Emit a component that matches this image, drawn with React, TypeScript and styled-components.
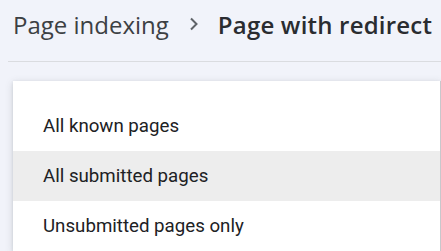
import React from "react";
import styled, { createGlobalStyle } from "styled-components";

const GlobalStyle = createGlobalStyle`
    html, body {
        margin: 0;
        padding: 0;
        background: #f1f3fa;
        overflow: hidden;
    }
`

const StyledPage = styled.div`
    width: 441px;
    height: 251px;
    overflow: hidden;
    background: #f1f3fa;
`

const StyledHeader = styled.div`
    display: flex;
    align-items: center;
    height: 48px;
    padding: 0 0 0 13px;
    margin-bottom: 13px;
    font-family: "Open Sans", "Inter", sans-serif;
    font-size: 24px;
    white-space: nowrap;
`

const StyledCrumb = styled.span<{ $current?: boolean }>`
    color: ${p => (p.$current ? "#2a2c30" : "#3c4043")};
    font-weight: ${p => (p.$current ? 600 : 400)};
    letter-spacing: ${p => (p.$current ? "0.2px" : "0")};
`

const StyledChevron = styled.svg`
    width: 12px;
    height: 14px;
    margin: 0 18px 0 19px;
    flex: 0 0 auto;
`

const StyledDivider = styled.div`
    height: 1px;
    margin-left: 8px;
    background: #dadce0;
`

const StyledMenu = styled.ul`
    list-style: none;
    margin: 19px 0 0 13px;
    padding: 20px 0 0;
    background: #ffffff;
    border-right: 1px solid #c8c8cc;
    box-shadow: 0 2px 8px rgba(60, 64, 67, 0.18), 0 1px 3px rgba(60, 64, 67, 0.12);
`

const StyledItem = styled.li<{ $active?: boolean }>`
    display: flex;
    align-items: center;
    height: 50px;
    padding-left: 30px;
    background: ${p => (p.$active ? "#ededed" : "transparent")};
    font-family: "Roboto", "Liberation Sans", sans-serif;
    font-size: 18.7px;
    color: #202124;
`

const items = ["All known pages", "All submitted pages", "Unsubmitted pages only"];

const App = (): JSX.Element => {
    return (
        <>
            <GlobalStyle />
            <StyledPage>
                <StyledHeader>
                    <StyledCrumb>Page indexing</StyledCrumb>
                    <StyledChevron viewBox="0 0 12 14">
                        <path d="M3 1.5 8.5 7 3 12.5" fill="none" stroke="#5f6368" strokeWidth="2" />
                    </StyledChevron>
                    <StyledCrumb $current>Page with redirect</StyledCrumb>
                </StyledHeader>
                <StyledDivider />
                <StyledMenu>
                    {items.map((item, i) => (
                        <StyledItem key={item} $active={i === 1}>{item}</StyledItem>
                    ))}
                </StyledMenu>
            </StyledPage>
        </>
    )
}

export default App;
